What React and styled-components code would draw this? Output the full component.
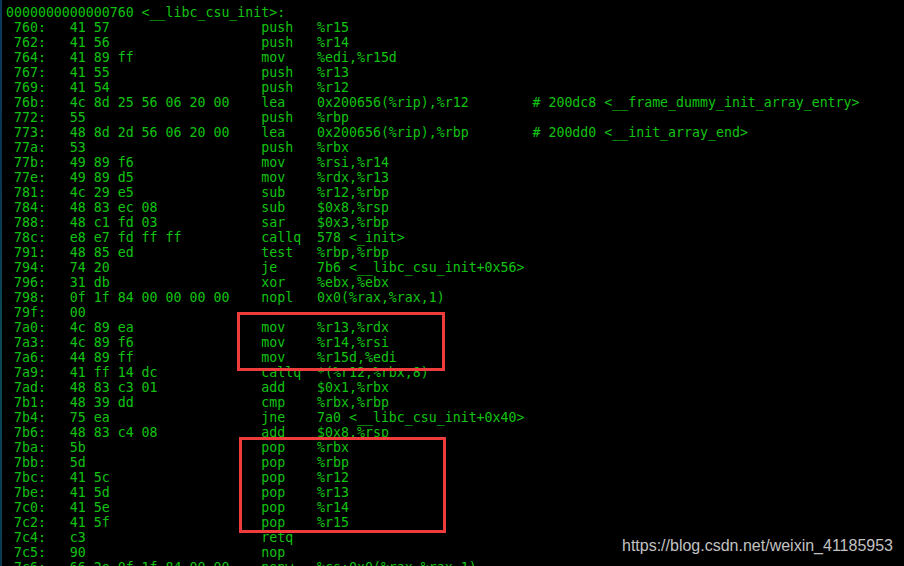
import React from "react";
import styled, { createGlobalStyle } from "styled-components";

const Global = createGlobalStyle`
  html, body { margin: 0; padding: 0; background: #000; }
  body { overflow: hidden; }
`;

const Screen = styled.div`
  position: relative;
  display: flex;
  width: 904px;
  height: 566px;
  overflow: hidden;
  background: #000;
`;

const Edge = styled.div`
  flex: 0 0 2px;
  background: linear-gradient(180deg, #0b3a5c 0%, #0a3550 30%, #0b4a55 60%, #0a3a52 100%);
`;

const Terminal = styled.div`
  flex: 1;
  padding: 5px 0 0 4px;
  font-family: "DejaVu Sans Mono", monospace;
  font-size: 13.25px;
  line-height: 15px;
  color: #12c312;
  white-space: pre;
`;

const Header = styled.div`
  height: 15px;
`;

const Row = styled.div`
  display: grid;
  grid-template-columns: 8ch 24ch 7ch max-content;
  height: 15px;
`;

const Cell = styled.span`
  white-space: pre;
`;

const Comment = styled.span`
  margin-left: 8ch;
`;

const Highlight = styled.div`
  position: absolute;
  box-sizing: border-box;
  border: 3px solid #ee3b3b;
  left: ${(p) => p.$x}px;
  top: ${(p) => p.$y}px;
  width: ${(p) => p.$w}px;
  height: ${(p) => p.$h}px;
`;

const Watermark = styled.div`
  position: absolute;
  right: 11px;
  top: 537px;
  font-family: "Liberation Sans", Arial, sans-serif;
  font-size: 16px;
  line-height: 18px;
  color: #c2c2c2;
`;

const rows = [
  ["760", "41 57", "push", "%r15"],
  ["762", "41 56", "push", "%r14"],
  ["764", "41 89 ff", "mov", "%edi,%r15d"],
  ["767", "41 55", "push", "%r13"],
  ["769", "41 54", "push", "%r12"],
  ["76b", "4c 8d 25 56 06 20 00", "lea", "0x200656(%rip),%r12", "# 200dc8 <__frame_dummy_init_array_entry>"],
  ["772", "55", "push", "%rbp"],
  ["773", "48 8d 2d 56 06 20 00", "lea", "0x200656(%rip),%rbp", "# 200dd0 <__init_array_end>"],
  ["77a", "53", "push", "%rbx"],
  ["77b", "49 89 f6", "mov", "%rsi,%r14"],
  ["77e", "49 89 d5", "mov", "%rdx,%r13"],
  ["781", "4c 29 e5", "sub", "%r12,%rbp"],
  ["784", "48 83 ec 08", "sub", "$0x8,%rsp"],
  ["788", "48 c1 fd 03", "sar", "$0x3,%rbp"],
  ["78c", "e8 e7 fd ff ff", "callq", "578 <_init>"],
  ["791", "48 85 ed", "test", "%rbp,%rbp"],
  ["794", "74 20", "je", "7b6 <__libc_csu_init+0x56>"],
  ["796", "31 db", "xor", "%ebx,%ebx"],
  ["798", "0f 1f 84 00 00 00 00", "nopl", "0x0(%rax,%rax,1)"],
  ["79f", "00", "", ""],
  ["7a0", "4c 89 ea", "mov", "%r13,%rdx"],
  ["7a3", "4c 89 f6", "mov", "%r14,%rsi"],
  ["7a6", "44 89 ff", "mov", "%r15d,%edi"],
  ["7a9", "41 ff 14 dc", "callq", "*(%r12,%rbx,8)"],
  ["7ad", "48 83 c3 01", "add", "$0x1,%rbx"],
  ["7b1", "48 39 dd", "cmp", "%rbx,%rbp"],
  ["7b4", "75 ea", "jne", "7a0 <__libc_csu_init+0x40>"],
  ["7b6", "48 83 c4 08", "add", "$0x8,%rsp"],
  ["7ba", "5b", "pop", "%rbx"],
  ["7bb", "5d", "pop", "%rbp"],
  ["7bc", "41 5c", "pop", "%r12"],
  ["7be", "41 5d", "pop", "%r13"],
  ["7c0", "41 5e", "pop", "%r14"],
  ["7c2", "41 5f", "pop", "%r15"],
  ["7c4", "c3", "retq", ""],
  ["7c5", "90", "nop", ""],
  ["7c6", "66 2e 0f 1f 84 00 00", "nopw", "%cs:0x0(%rax,%rax,1)"],
];

export default function App() {
  return (
    <>
      <Global />
      <Screen>
        <Edge />
        <Terminal>
          <Header>0000000000000760 &lt;__libc_csu_init&gt;:</Header>
          {rows.map(([addr, bytes, op, args, comment]) => (
            <Row key={addr}>
              <Cell>{` ${addr}:`}</Cell>
              <Cell>{bytes}</Cell>
              <Cell>{op}</Cell>
              <Cell>
                {args}
                {comment ? <Comment>{comment}</Comment> : null}
              </Cell>
            </Row>
          ))}
        </Terminal>
        <Highlight $x={237} $y={312} $w={208} $h={59} />
        <Highlight $x={239} $y={437} $w={207} $h={96} />
        <Watermark>https://blog.csdn.net/weixin_41185953</Watermark>
      </Screen>
    </>
  );
}
